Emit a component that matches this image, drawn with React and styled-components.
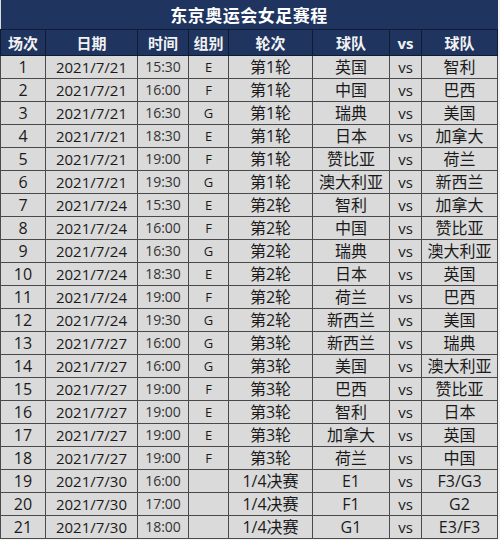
import React from "react";
import styled, { createGlobalStyle } from "styled-components";

const GlobalStyle = createGlobalStyle`
    html, body {
        margin: 0;
        padding: 0;
        background: #f4f4f4;
    }
    body {
        font-family: "Open Sans", "Noto Sans CJK SC", sans-serif;
    }
`;

const columns = [45, 92, 51, 40, 84, 77, 32, 76];
const headers = ["场次", "日期", "时间", "组别", "轮次", "球队", "vs", "球队"];

const rows = [
    ["1", "2021/7/21", "15:30", "E", "第1轮", "英国", "智利"],
    ["2", "2021/7/21", "16:00", "F", "第1轮", "中国", "巴西"],
    ["3", "2021/7/21", "16:30", "G", "第1轮", "瑞典", "美国"],
    ["4", "2021/7/21", "18:30", "E", "第1轮", "日本", "加拿大"],
    ["5", "2021/7/21", "19:00", "F", "第1轮", "赞比亚", "荷兰"],
    ["6", "2021/7/21", "19:30", "G", "第1轮", "澳大利亚", "新西兰"],
    ["7", "2021/7/24", "15:30", "E", "第2轮", "智利", "加拿大"],
    ["8", "2021/7/24", "16:00", "F", "第2轮", "中国", "赞比亚"],
    ["9", "2021/7/24", "16:30", "G", "第2轮", "瑞典", "澳大利亚"],
    ["10", "2021/7/24", "18:30", "E", "第2轮", "日本", "英国"],
    ["11", "2021/7/24", "19:00", "F", "第2轮", "荷兰", "巴西"],
    ["12", "2021/7/24", "19:30", "G", "第2轮", "新西兰", "美国"],
    ["13", "2021/7/27", "16:00", "G", "第3轮", "新西兰", "瑞典"],
    ["14", "2021/7/27", "16:00", "G", "第3轮", "美国", "澳大利亚"],
    ["15", "2021/7/27", "19:00", "F", "第3轮", "巴西", "赞比亚"],
    ["16", "2021/7/27", "19:00", "E", "第3轮", "智利", "日本"],
    ["17", "2021/7/27", "19:00", "E", "第3轮", "加拿大", "英国"],
    ["18", "2021/7/27", "19:00", "F", "第3轮", "荷兰", "中国"],
    ["19", "2021/7/30", "16:00", "", "1/4决赛", "E1", "F3/G3"],
    ["20", "2021/7/30", "17:00", "", "1/4决赛", "F1", "G2"],
    ["21", "2021/7/30", "18:00", "", "1/4决赛", "G1", "E3/F3"],
];

export default function App() {
    return (
        <Page>
            <GlobalStyle />
            <Table>
                <colgroup>
                    {columns.map((w, i) => (
                        <col key={i} style={{ width: w }} />
                    ))}
                </colgroup>
                <thead>
                    <tr>
                        <Title colSpan={8}>东京奥运会女足赛程</Title>
                    </tr>
                    <tr>
                        {headers.map((h, i) => (
                            <HeadCell key={i}>{h}</HeadCell>
                        ))}
                    </tr>
                </thead>
                <tbody>
                    {rows.map((r) => (
                        <Row key={r[0]}>
                            <Cell $size={16}>{r[0]}</Cell>
                            <Cell $size={15}>{r[1]}</Cell>
                            <Cell $size={14} $muted>
                                {r[2]}
                            </Cell>
                            <Cell $size={13}>{r[3]}</Cell>
                            <Cell>{r[4]}</Cell>
                            <Cell>{r[5]}</Cell>
                            <Cell $size={15}>vs</Cell>
                            <Cell>{r[6]}</Cell>
                        </Row>
                    ))}
                </tbody>
            </Table>
        </Page>
    );
}

const Page = styled.div`
    width: 500px;
    height: 540px;
    overflow: hidden;
`;

const Table = styled.table`
    border-collapse: collapse;
    table-layout: fixed;
    width: 497px;
    background: #dadada;
`;

const Title = styled.th`
    height: 29px;
    padding: 0;
    background: #1f3560;
    color: #ffffff;
    font-size: 17px;
    font-weight: 700;
    text-align: center;
    letter-spacing: 0.5px;
    border-bottom: 1px solid #101c36;
`;

const HeadCell = styled.th`
    height: 25px;
    padding: 0;
    background: #1f3560;
    color: #f2f2f2;
    font-size: 15px;
    font-weight: 700;
    text-align: center;
    border: 1px solid #0f1a33;
`;

const Row = styled.tr`
    height: 23px;
`;

const Cell = styled.td`
    padding: 0;
    text-align: center;
    font-size: ${(p) => p.$size || 16}px;
    line-height: 20px;
    color: ${(p) => (p.$muted ? "#333" : "#1a1a1a")};
    border: 1px solid #4a4a4a;
    white-space: nowrap;
    overflow: hidden;
`;
